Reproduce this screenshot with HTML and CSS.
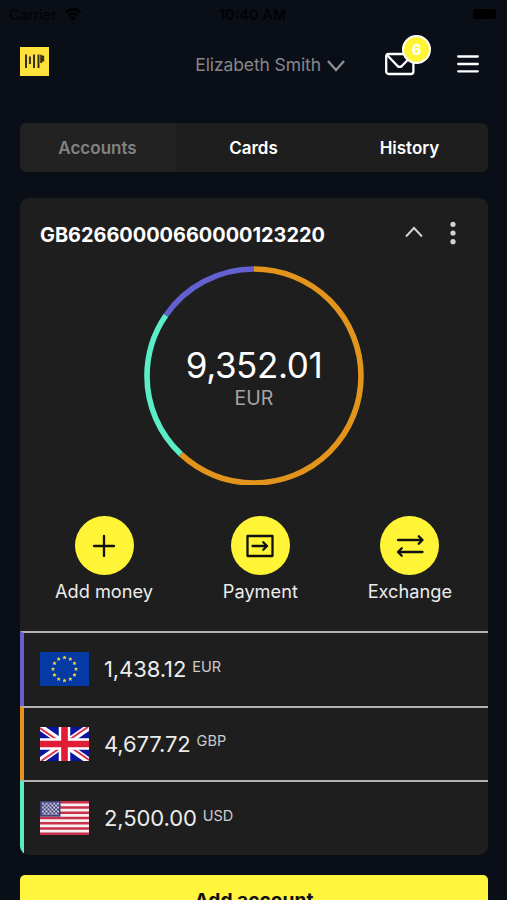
FILE: index.html
```html
<!DOCTYPE html>
<html lang="en">
<head>
    <meta charset="UTF-8">
    <meta name="viewport" content="width=device-width, initial-scale=1.0">
    <title>Accounts</title>
    <link rel="stylesheet" href="styles.css">
</head>
<body>
    <div class="status-bar">
        <div class="carrier">
            <span>Carrier</span>
            <svg width="18" height="14" viewBox="0 0 18 14" fill="none" stroke="#000" stroke-width="2.6">
                <path d="M1.5 5.5a10.6 10.6 0 0 1 15 0M4.5 8.5a6.4 6.4 0 0 1 9 0"/>
                <path d="M9 13.5L6.3 10.8a3.8 3.8 0 0 1 5.4 0z" fill="#000" stroke="none"/>
            </svg>
        </div>
        <span class="time">10:40 AM</span>
        <span class="battery"></span>
    </div>

    <header class="header">
        <svg class="logo" width="29" height="29" viewBox="0 0 29 29">
            <rect width="29" height="29" fill="#ffe13c"/>
            <g fill="none" stroke="#35311c" stroke-width="2">
                <path d="M6 7.5v13.500M9.900 9.500v7.500M14 7.500v13.500M18.500 7.500v13.500M21.200 7.800v8.200M23.200 8.800v5.700"/>
            </g>
        </svg>
        <div class="user">
            <span>Elizabeth Smith</span>
            <svg width="18" height="12" viewBox="0 0 18 12" fill="none" stroke="#919297" stroke-width="2.200">
                <path d="M1 1l8 9 8-9"/>
            </svg>
        </div>
        <div class="mail">
            <svg width="30" height="24" viewBox="0 0 30 24" fill="none" stroke="#fff" stroke-width="2.300">
                <rect x="1.200" y="2" width="27.200" height="20" rx="2.500"/>
                <path d="M2 3l10.500 11q2.200 1.800 4.400 0l10.600-11"/>
            </svg>
            <span class="badge">6</span>
        </div>
        <svg class="menu" width="22" height="18" viewBox="0 0 22 18" stroke="#fff" stroke-width="2.300" stroke-linecap="round">
            <path d="M1.200 1.500h19.600M1.200 9h19.600M1.200 16.300h19.600"/>
        </svg>
    </header>

    <nav class="tabs">
        <a class="tab active">Accounts</a>
        <a class="tab">Cards</a>
        <a class="tab">History</a>
    </nav>

    <section class="card">
        <div class="card-header">
            <h1>GB62660000660000123220</h1>
            <svg class="collapse" width="18" height="12" viewBox="0 0 18 12" fill="none" stroke="#d4d4d4" stroke-width="1.900">
                <path d="M1 10.500L9 2l8 8.500"/>
            </svg>
            <svg class="more" width="6" height="24" viewBox="0 0 6 24" fill="#d4d4d4">
                <circle cx="3" cy="3.300" r="2.600"/>
                <circle cx="3" cy="12" r="2.600"/>
                <circle cx="3" cy="20.700" r="2.600"/>
            </svg>
        </div>

        <div class="chart">
            <svg width="220" height="219" viewBox="0 0 220 219" fill="none" stroke-width="5.600">
                <g transform="rotate(-90 110 110)">
                    <circle cx="110" cy="110" r="107" pathLength="360" stroke="#e2941c" stroke-dasharray="223.100 360"/>
                    <circle cx="110" cy="110" r="107" pathLength="360" stroke="#59edc8" stroke-dasharray="81.500 360" stroke-dashoffset="-223.100"/>
                    <circle cx="110" cy="110" r="107" pathLength="360" stroke="#6360cf" stroke-dasharray="55.400 360" stroke-dashoffset="-304.600"/>
                </g>
            </svg>
            <div class="total">
                <div class="amount">9,352.01</div>
                <div class="currency">EUR</div>
            </div>
        </div>

        <div class="actions">
            <div class="action">
                <span class="circle">
                    <svg width="24" height="24" viewBox="0 0 24 24" fill="none" stroke="#111" stroke-width="2.300" stroke-linecap="round">
                        <path d="M12 2v20M2 12h20"/>
                    </svg>
                </span>
                <span>Add money</span>
            </div>
            <div class="action">
                <span class="circle">
                    <svg width="30" height="24" viewBox="0 0 30 24" fill="none" stroke="#111" stroke-width="2.300" stroke-linecap="round" stroke-linejoin="round">
                        <rect x="2.500" y="2" width="25" height="20"/>
                        <path d="M7.500 12h14.500M18.300 8.300L22 12l-3.700 3.700"/>
                    </svg>
                </span>
                <span>Payment</span>
            </div>
            <div class="action">
                <span class="circle">
                    <svg width="28" height="24" viewBox="0 0 28 24" fill="none" stroke="#111" stroke-width="2.300" stroke-linecap="round" stroke-linejoin="round">
                        <path d="M2 6h24.500M22.800 2.200L26.500 6l-3.700 3.700M26.500 18H2M5.700 14.300L2 18l3.700 3.700"/>
                    </svg>
                </span>
                <span>Exchange</span>
            </div>
        </div>

        <div class="balance eur">
            <svg class="flag" viewBox="0 0 49 34" preserveAspectRatio="none">
                <defs>
                    <path id="star" d="M0-2.100l.6 1.400h1.500l-1.100 1 .5 1.600L0 1.100l-1.500.8.500-1.600-1.100-1h1.500z"/>
                </defs>
                <rect width="49" height="34" fill="#0539a4"/>
                <g fill="#f3d94b">
                    <use href="#star" x="24.500" y="5.500"/>
                    <use href="#star" x="30.300" y="7"/>
                    <use href="#star" x="34.500" y="11.200"/>
                    <use href="#star" x="36" y="17"/>
                    <use href="#star" x="34.500" y="22.800"/>
                    <use href="#star" x="30.300" y="27"/>
                    <use href="#star" x="24.500" y="28.500"/>
                    <use href="#star" x="18.700" y="27"/>
                    <use href="#star" x="14.500" y="22.800"/>
                    <use href="#star" x="13" y="17"/>
                    <use href="#star" x="14.500" y="11.200"/>
                    <use href="#star" x="18.700" y="7"/>
                </g>
            </svg>
            <span class="value">1,438.12</span>
            <span class="code">EUR</span>
        </div>
        <div class="balance gbp">
            <svg class="flag" viewBox="0 0 49 34" preserveAspectRatio="none">
                <rect width="49" height="34" fill="#0b149c"/>
                <path d="M0 0l49 34M49 0L0 34" stroke="#fff" stroke-width="6.500"/>
                <path d="M0 1l24.500 17M49 33L24.500 16M48 0L24.500 16M1 34l23.500-16" stroke="#dc3350" stroke-width="2"/>
                <path d="M24.500 0v34M0 17h49" stroke="#fff" stroke-width="11.500"/>
                <path d="M24.500 0v34M0 17h49" stroke="#e01c36" stroke-width="6.600"/>
            </svg>
            <span class="value">4,677.72</span>
            <span class="code">GBP</span>
        </div>
        <div class="balance usd">
            <svg class="flag" viewBox="0 0 49 34" preserveAspectRatio="none">
                <defs>
                    <pattern id="stars" x="1.800" y="1.500" width="3.800" height="4" patternUnits="userSpaceOnUse">
                        <circle cx="1" cy="1" r=".9" fill="#fff"/>
                        <circle cx="2.900" cy="3" r=".9" fill="#fff"/>
                    </pattern>
                </defs>
                <rect width="49" height="34" fill="#f7eef0"/>
                <path d="M0 1.300h49M0 6.540h49M0 11.770h49M0 17h49M0 22.230h49M0 27.460h49M0 32.700h49" stroke="#c9304a" stroke-width="2.620"/>
                <rect width="20.500" height="15.700" fill="#40407c"/>
                <rect x="1.800" y="1.500" width="17.200" height="12.500" fill="url(#stars)"/>
            </svg>
            <span class="value">2,500.00</span>
            <span class="code">USD</span>
        </div>
    </section>

    <button class="add-account">Add account</button>
</body>
</html>
```

FILE: styles.css
```css
* {
    box-sizing: border-box;
}
body {
    margin: 0;
    height: 900px;
    overflow: hidden;
    background-color: #0a0e16;
    color: #fff;
    font-family: Inter, "Liberation Sans", sans-serif;
}
.status-bar {
    height: 28px;
    padding: 0 11px 0 9px;
    display: grid;
    grid-template-columns: 1fr auto 1fr;
    align-items: center;
    color: #020305;
    font-size: 14.5px;
}
.carrier {
    display: flex;
    align-items: center;
    gap: 7px;
}
.time {
    font-weight: 600;
}
.battery {
    justify-self: end;
    width: 23px;
    height: 10px;
    border-radius: 3px;
    background-color: #000;
}
.header {
    display: flex;
    align-items: center;
    height: 72px;
    padding: 0 28px 0 20px;
}
.logo {
    margin-bottom: 6px;
}
.user {
    display: flex;
    align-items: center;
    gap: 6px;
    margin-left: auto;
    color: #86878b;
    font-size: 17.5px;
    letter-spacing: -0.1px;
}
.user svg {
    margin-top: 3px;
}
.mail {
    position: relative;
    height: 24px;
    margin: 0 42px 0 40px;
}
.mail svg {
    display: block;
}
.badge {
    position: absolute;
    top: -17px;
    left: 17px;
    width: 29px;
    height: 29px;
    border: 2px solid #fff;
    border-radius: 50%;
    background-color: #fff536;
    font-size: 15px;
    font-weight: 700;
    line-height: 25px;
    text-align: center;
}
.tabs {
    display: flex;
    height: 49px;
    margin: 23px 19px 26px 20px;
    border-radius: 6px;
    overflow: hidden;
    background-color: #1e1e1e;
}
.tab {
    flex: 1;
    padding-right: 1px;
    font-size: 17px;
    font-weight: 600;
    line-height: 50px;
    text-align: center;
}
.tab.active {
    background-color: #222;
    color: #838383;
}
.card {
    margin: 0 19px 20px 20px;
    border-radius: 9px;
    overflow: hidden;
    background-color: #1e1e1e;
}
.card-header {
    display: flex;
    align-items: center;
    height: 68px;
    padding: 6px 32px 0 20px;
}
.card-header h1 {
    margin: 0 auto 0 0;
    font-size: 19.9px;
    font-weight: 700;
}
.collapse {
    margin: 0 27px 6px 0;
}
.more {
    margin-bottom: 4px;
}
.chart {
    display: grid;
    justify-content: center;
    height: 250px;
}
.chart svg,
.total {
    grid-area: 1 / 1;
}
.total {
    padding-top: 77px;
    text-align: center;
}
.amount {
    font-size: 35px;
    letter-spacing: -0.4px;
    line-height: 44px;
}
.currency {
    color: #a5a5a5;
    font-size: 19.5px;
    line-height: 22px;
}
.actions {
    display: flex;
    justify-content: space-between;
    height: 115px;
    padding: 0 36px 0 35px;
    color: #ececec;
    font-size: 18.2px;
}
.action {
    display: flex;
    flex-direction: column;
    align-items: center;
    gap: 5px;
}
.circle {
    display: flex;
    align-items: center;
    justify-content: center;
    width: 59px;
    height: 59px;
    border-radius: 50%;
    background-color: #fff536;
}
.balance {
    display: flex;
    align-items: center;
    height: 74.5px;
    padding-left: 16px;
    border-top: 2px solid #b4b1b3;
    border-left: 4px solid;
}
.eur {
    border-left-color: #6360cf;
}
.gbp {
    border-left-color: #e2941c;
}
.usd {
    border-left-color: #59edc8;
}
.flag {
    width: 49px;
    height: 34px;
    margin-right: 15px;
}
.value {
    color: #ececec;
    font-size: 22px;
    letter-spacing: -0.1px;
}
.code {
    margin: 0 0 6px 6px;
    color: #ccc;
    font-size: 14.5px;
}
.add-account {
    display: block;
    width: 468px;
    height: 50px;
    margin: 0 20px;
    padding-top: 2px;
    border: none;
    border-radius: 5px;
    background-color: #fff53d;
    color: #111;
    font-family: inherit;
    font-size: 19.2px;
    font-weight: 700;
}
```
